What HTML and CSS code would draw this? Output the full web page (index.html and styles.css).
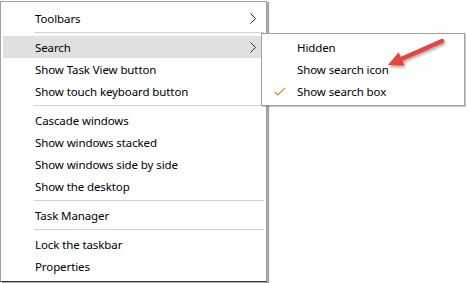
FILE: index.html
```html
<!DOCTYPE html>
<html lang="en">
<head>
    <meta charset="UTF-8">
    <title>Taskbar context menu</title>
    <link rel="stylesheet" href="styles.css">
</head>
<body>
    <div class="context-menu">
        <div class="menu-item has-sub">
            <span>Toolbars</span>
            <svg class="chevron" width="6" height="11" viewBox="0 0 6 11"><polyline points="0.5,0.5 5.5,5.5 0.5,10.5"/></svg>
        </div>
        <div class="separator"></div>
        <div class="menu-item has-sub active">
            <span>Search</span>
            <svg class="chevron" width="6" height="11" viewBox="0 0 6 11"><polyline points="0.5,0.5 5.5,5.5 0.5,10.5"/></svg>
        </div>
        <div class="menu-item">Show Task View button</div>
        <div class="menu-item">Show touch keyboard button</div>
        <div class="separator"></div>
        <div class="menu-item">Cascade windows</div>
        <div class="menu-item">Show windows stacked</div>
        <div class="menu-item">Show windows side by side</div>
        <div class="menu-item">Show the desktop</div>
        <div class="separator"></div>
        <div class="menu-item">Task Manager</div>
        <div class="separator"></div>
        <div class="menu-item">Lock the taskbar</div>
        <div class="menu-item">Properties</div>
    </div>

    <div class="sub-menu">
        <div class="sub-item"><span class="check"></span>Hidden</div>
        <div class="sub-item"><span class="check"></span>Show search icon</div>
        <div class="sub-item">
            <span class="check">
                <svg width="12" height="9" viewBox="0 0 12 9"><polyline points="0.8,5 3.8,8 11.2,0.8"/></svg>
            </span>Show search box
        </div>
    </div>

    <!-- annotation arrow -->
    <svg class="callout" width="466" height="283" viewBox="0 0 466 283">
        <line x1="442" y1="41" x2="399" y2="60" />
        <polygon points="388,65 398.6,52.2 404.6,65.6" />
    </svg>
</body>
</html>
```

FILE: styles.css
```css
* {
    margin: 0;
    padding: 0;
    box-sizing: border-box;
}

body {
    font-family: 'Noto Sans', 'Open Sans', sans-serif;
    font-size: 11.5px;
    letter-spacing: -0.1px;
    color: #000;
    background: #fff;
    width: 466px;
    height: 283px;
    position: relative;
    overflow: hidden;
}

.context-menu {
    margin-top: 1px;
    width: 267px;
    background: #fff;
    border: 1px solid #a0a0a0;
    border-bottom-color: #3a3a3a;
    padding: 5px 0 4px;
    box-shadow: 2px 1px 1px rgba(0, 0, 0, 0.35);
}

.menu-item {
    height: 22px;
    margin: 0 2px;
    padding: 0 8px 0 32px;
    display: flex;
    align-items: center;
    justify-content: space-between;
    white-space: nowrap;
}

.menu-item.active {
    background: #e0e0e0;
}

.chevron polyline {
    fill: none;
    stroke: #2b2b3a;
    stroke-width: 1;
}

.separator {
    height: 1px;
    margin: 3px 2px 3px 33px;
    background: #d3d3d3;
}

/* flyout for Search */
.sub-menu {
    position: absolute;
    left: 261px;
    top: 33px;
    width: 204px;
    background: #fff;
    border: 1px solid #a0a0a0;
    padding: 2px 0 3px;
    box-shadow: 1px 1px 1px rgba(0, 0, 0, 0.2);
}

.sub-item {
    height: 22px;
    margin: 0 2px;
    padding-left: 10px;
    display: flex;
    align-items: center;
    white-space: nowrap;
}

.check {
    width: 23px;
    display: flex;
    align-items: center;
}

.check polyline {
    fill: none;
    stroke: #c98634;
    stroke-width: 1.1;
}

.callout {
    position: absolute;
    left: 0;
    top: 0;
    filter: drop-shadow(1px 2px 1.5px rgba(0, 0, 0, 0.35));
}

.callout line {
    stroke: #e6453b;
    stroke-width: 4.5;
    stroke-linecap: round;
}

.callout polygon {
    fill: #e6453b;
}
```
